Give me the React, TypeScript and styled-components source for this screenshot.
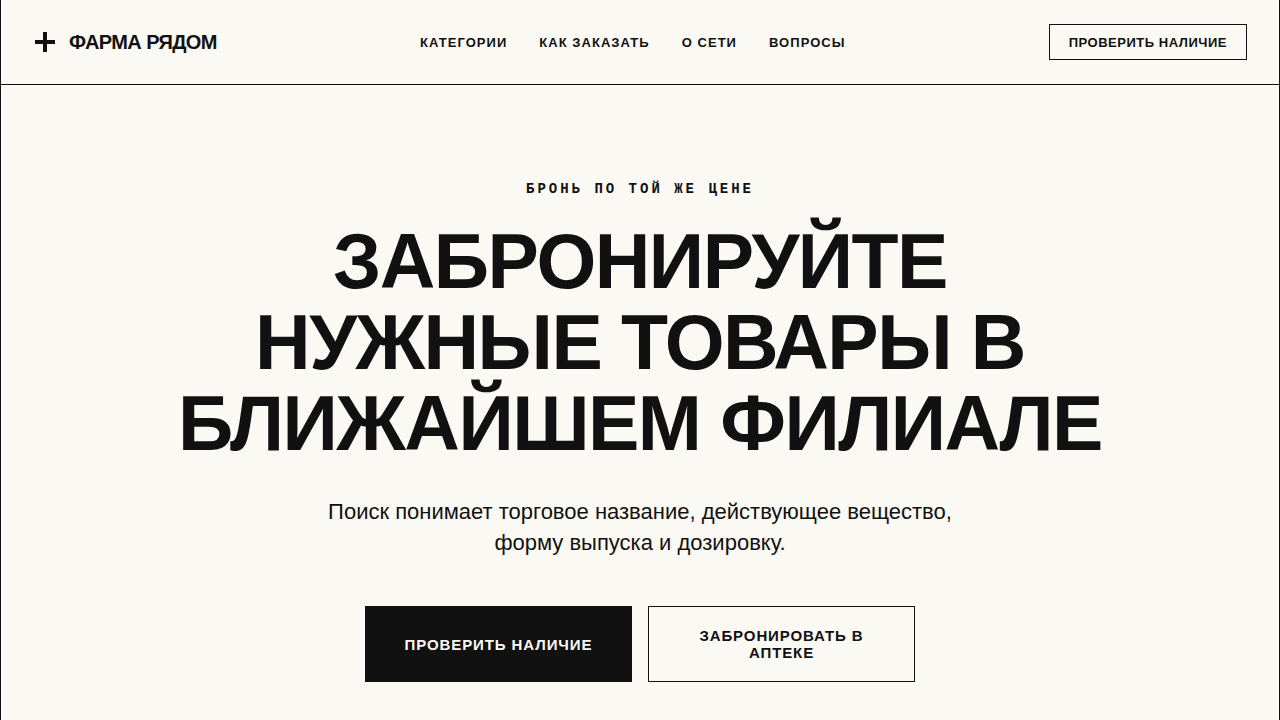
import React from "react";
import styled, { createGlobalStyle } from "styled-components";

const ink = "#111111";
const paper = "#fbf9f4";

const GlobalStyle = createGlobalStyle`
  *, *::before, *::after { box-sizing: border-box; }
  body {
    margin: 0;
    background: ${paper};
    color: ${ink};
    font-family: "Liberation Sans", Arial, sans-serif;
  }
`;

const Page = styled.div`
  min-height: 100vh;
  border: solid ${ink};
  border-width: 0 1px;
`;

const Header = styled.header`
  display: flex;
  align-items: center;
  justify-content: space-between;
  padding: 24px 32px;
  border-bottom: 1px solid ${ink};
`;

const Brand = styled.a`
  display: flex;
  align-items: center;
  gap: 12px;
  color: inherit;
  text-decoration: none;
  font-size: 20px;
  font-weight: 700;
  letter-spacing: -0.03em;
`;

const Nav = styled.nav`
  display: flex;
  gap: 32px;
`;

const NavLink = styled.a`
  color: inherit;
  text-decoration: none;
  font-size: 13px;
  font-weight: 700;
  letter-spacing: 0.08em;
`;

const Button = styled.button<{ $solid?: boolean; $large?: boolean }>`
  border: 1px solid ${ink};
  border-radius: 0;
  background: ${(p) => (p.$solid ? ink : "transparent")};
  color: ${(p) => (p.$solid ? paper : ink)};
  padding: ${(p) => (p.$large ? "20px 32px" : "0 19px")};
  min-height: ${(p) => (p.$large ? 76 : 36)}px;
  font-family: inherit;
  font-size: ${(p) => (p.$large ? 15 : 13)}px;
  line-height: 17px;
  font-weight: 700;
  letter-spacing: ${(p) => (p.$large ? "0.06em" : "0.04em")};
  cursor: pointer;
`;

const Hero = styled.main`
  display: flex;
  flex-direction: column;
  align-items: center;
  padding: 96px 32px;
  text-align: center;
`;

const Eyebrow = styled.p`
  margin: 0 0 24px;
  font-family: "Liberation Mono", monospace;
  font-size: 14px;
  line-height: 16px;
  font-weight: 700;
  letter-spacing: 3px;
`;

const Title = styled.h1`
  max-width: 960px;
  margin: 0 0 32px;
  font-size: 77px;
  line-height: 81px;
  font-weight: 700;
  letter-spacing: -0.02em;
`;

const Lead = styled.p`
  max-width: 640px;
  margin: 0 0 48px;
  font-size: 22px;
  line-height: 31px;
`;

const Actions = styled.div`
  display: grid;
  grid-template-columns: 1fr 1fr;
  gap: 16px;
  width: 100%;
  max-width: 550px;
`;

export default function App() {
  return (
    <>
      <GlobalStyle />
      <Page>
        <Header>
          <Brand href="#">
            <svg width="24" height="24" viewBox="0 0 24 24" aria-hidden="true">
              <path d="M12 2v20M2 12h20" stroke={ink} strokeWidth="4" />
            </svg>
            ФАРМА РЯДОМ
          </Brand>
          <Nav>
            <NavLink href="#categories">КАТЕГОРИИ</NavLink>
            <NavLink href="#order">КАК ЗАКАЗАТЬ</NavLink>
            <NavLink href="#about">О СЕТИ</NavLink>
            <NavLink href="#faq">ВОПРОСЫ</NavLink>
          </Nav>
          <Button>ПРОВЕРИТЬ НАЛИЧИЕ</Button>
        </Header>
        <Hero>
          <Eyebrow>БРОНЬ ПО ТОЙ ЖЕ ЦЕНЕ</Eyebrow>
          <Title>ЗАБРОНИРУЙТЕ НУЖНЫЕ ТОВАРЫ В БЛИЖАЙШЕМ ФИЛИАЛЕ</Title>
          <Lead>
            Поиск понимает торговое название, действующее вещество, форму выпуска и дозировку.
          </Lead>
          <Actions>
            <Button $solid $large>ПРОВЕРИТЬ НАЛИЧИЕ</Button>
            <Button $large>ЗАБРОНИРОВАТЬ В АПТЕКЕ</Button>
          </Actions>
        </Hero>
      </Page>
    </>
  );
}
